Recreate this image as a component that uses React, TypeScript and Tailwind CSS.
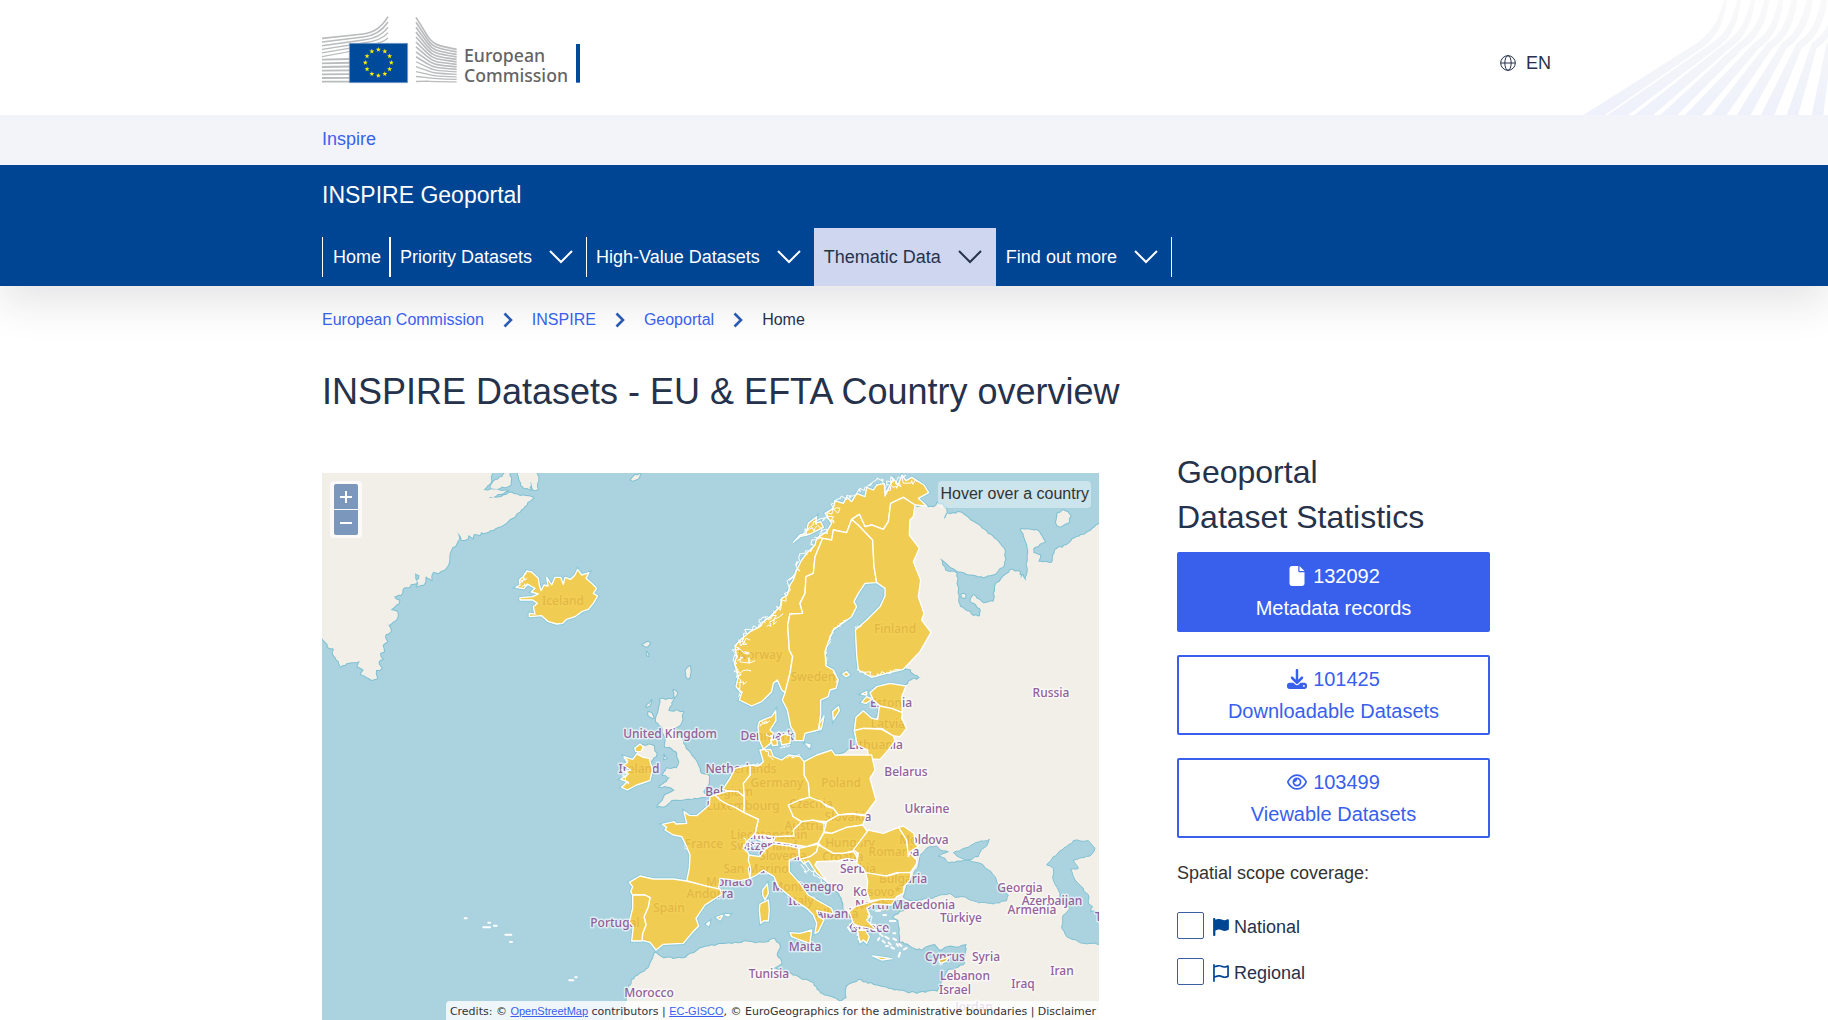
import { useState } from 'react'
import { FaDownload, FaFile, FaFlag, FaRegEye, FaRegFlag } from 'react-icons/fa6'

interface Shape {
  origin: string
  d: string
}

interface MapLabel {
  name: string
  x: number
  y: number
}

// Shapes are digitised per sheet at three units to the pixel
const NW = 'translate(-2 -3) scale(0.33333)'
const NE = 'translate(378 -3) scale(0.33333)'
const SW = 'translate(-2 272) scale(0.33333)'
const MID = 'translate(278 217) scale(0.33333)'
const EAST = 'translate(478 217) scale(0.33333)'
const SOUTH = 'translate(378 367) scale(0.33333)'

// Breaks every straight run of an absolute M/L path into short jagged steps
function roughen(d: string, amp: number, step: number) {
  let seed = 7
  const rand = () => {
    seed = (seed * 1103515245 + 12345) % 2147483648
    return seed / 2147483648 - 0.5
  }
  return d
    .split('M')
    .filter(Boolean)
    .map((part) => {
      const closed = part.trim().endsWith('Z')
      const nums = (part.match(/-?\d+/g) || []).map(Number)
      const pts: number[][] = []
      for (let i = 0; i + 1 < nums.length; i += 2) pts.push([nums[i], nums[i + 1]])
      if (closed) pts.push(pts[0])
      const out = [`M${pts[0][0]} ${pts[0][1]}`]
      for (let i = 1; i < pts.length; i++) {
        const [x0, y0] = pts[i - 1]
        const [x1, y1] = pts[i]
        const n = Math.max(1, Math.round(Math.hypot(x1 - x0, y1 - y0) / step))
        for (let k = 1; k < n; k++) {
          const x = x0 + ((x1 - x0) * k) / n + rand() * amp
          const y = y0 + ((y1 - y0) * k) / n + rand() * amp
          out.push(`L${x.toFixed(1)} ${y.toFixed(1)}`)
        }
        out.push(`L${x1} ${y1}`)
      }
      return out.join('') + (closed ? 'Z' : '')
    })
    .join('')
}

const landOutlines: Shape[] = [
  // Greenland
  {
    origin: NW,
    d: 'M-20 -20L520 -20 512 38 490 60 530 58 565 62 540 72 505 85 545 80 575 68 600 78 640 83 620 105 600 125 575 145 550 165 520 180 490 190 484 186 480 195 462 192 460 205 445 195 440 208 425 210 408 180 418 208 395 238 388 270 378 295 355 310 340 305 335 330 318 318 310 345 290 350 298 315 285 310 290 340 250 355 243 375 222 380 238 392 212 420 232 425 228 450 205 465 212 485 195 500 202 515 188 525 192 545 180 550 188 568 176 575 185 595 168 600 172 625 155 630 140 622 122 612 132 600 112 590 120 572 75 585 62 590 40 555 42 538 30 535 10 510 -20 480Z',
  },
  { origin: NW, d: 'M520 35L570 0 572 45 540 55 512 55Z' },
  { origin: NW, d: 'M590 -5L598 30 612 55 632 60 630 35 638 58 654 58 652 -5Z' },
  { origin: NW, d: 'M932 30L945 15 962 10 950 28Z' },
  { origin: NW, d: 'M968 524L985 515 990 520 978 530ZM980 545L986 558 981 556Z' },
  { origin: NW, d: 'M1097 600L1110 588 1112 605 1104 626Z' },
  { origin: NW, d: 'M1060 660L1072 668 1063 682Z' },
  // Continental Europe with Russia, Turkey and the Levant
  {
    origin: NE,
    d: 'M670 105L700 112 712 98 728 103 740 128 730 155 742 130 760 130 785 128 820 155 860 185 895 215 915 245 912 285 885 312 850 322 800 312 760 295 720 265 735 300 770 310 773 370 780 410 810 425 820 438 840 438 840 415 812 395 820 375 850 400 880 395 885 350 930 300 960 305 962 325 968 315 978 332 982 290 982 230 962 178 1010 180 1035 215 1015 228 1000 235 1000 248 1020 255 1015 275 1055 278 1065 240 1100 225 1130 200 1165 185 1190 165 1230 160 1230 1680 722 1680 712 1565 745 1500 770 1495 795 1480 800 1422 770 1430 745 1428 720 1440 705 1422 670 1435 650 1438 620 1420 600 1415 598 1390 595 1350 580 1342 600 1325 630 1315 610 1290 580 1290 520 1310 500 1325 500 1370 480 1400 455 1370 455 1345 430 1315 425 1285 390 1245 350 1200 320 1165 300 1175 270 1150 150 1100 300 900 430 850 445 838 465 825 500 820 510 760 580 700 600 660 635 630 665 625 645 614 632 598 600 596 560 560 540 450 600 330 590 200 600 120Z',
  },
  { origin: NE, d: 'M1068 158L1072 130 1090 120 1112 138 1102 160 1080 170Z' },
  { origin: NE, d: 'M785 372L797 375 795 384 785 382Z' },
  // North Africa
  {
    origin: SOUTH,
    d: 'M-235 570L-225 490 -215 455 -205 420 -155 385 -135 338 -125 345 -110 355 -50 355 -20 340 0 325 50 315 130 305 190 308 225 298 240 320 230 345 245 370 220 385 265 400 300 415 340 430 360 460 420 485 440 475 440 440 475 420 520 435 590 450 650 462 700 452 716 456 716 570Z',
  },
  // Great Britain and Northern Ireland
  {
    origin: MID,
    d: 'M180 28L222 25 205 62 250 65 245 95 222 120 240 140 262 180 290 215 300 245 328 260 325 285 310 305 325 320 290 325 240 330 215 330 200 345 172 350 195 315 225 300 212 292 178 290 200 275 210 262 188 255 200 235 230 235 238 215 232 190 215 175 195 170 195 140 185 110 168 95 176 60Z',
  },
  { origin: MID, d: 'M108 192L125 165 155 165 170 190 155 212 120 205Z' },
  { origin: MID, d: 'M138 50L155 30 148 48ZM145 65L155 70 160 85 150 80ZM192 195L200 205 192 208Z' },
]

const land = landOutlines.map((shape) => ({ ...shape, d: roughen(shape.d, 6, 8) }))

const inlandWater: Shape[] = [
  // Black Sea and Sea of Azov
  {
    origin: SOUTH,
    d: 'M610 172L620 130 640 105 655 75 660 45 690 20 710 18 720 30 745 35 715 48 735 55 745 68 800 60 850 75 885 110 895 135 925 165 920 182 880 192 830 185 790 170 765 172 750 160 720 165 690 175 650 182 630 182Z',
  },
  { origin: SOUTH, d: 'M760 38L785 28 820 12 868 -2 860 18 845 28 835 50 800 60 778 52Z' },
  // Caspian Sea
  {
    origin: SOUTH,
    d: 'M1040 75L1060 50 1100 20 1120 2 1165 2 1185 25 1170 48 1120 60 1135 85 1112 88 1125 120 1165 165 1165 190 1178 200 1172 215 1220 215 1220 312 1150 310 1100 290 1085 260 1090 225 1110 205 1085 190 1080 160 1060 120 1060 85Z',
  },
  { origin: SOUTH, d: 'M580 205L610 190 640 195 610 205Z' },
].map((shape) => ({ ...shape, d: roughen(shape.d, 5, 9) }))

const countries: Shape[] = [
  // Iceland
  {
    origin: NW,
    d: 'M588 352L600 345 598 330 612 318 620 303 635 306 655 325 658 345 663 362 672 345 684 348 680 322 695 345 705 322 722 322 730 343 735 322 752 328 765 315 773 298 785 315 807 308 798 325 815 340 830 355 820 370 833 378 820 400 805 418 785 425 765 440 740 448 728 460 710 462 685 455 665 437 628 440 628 430 645 432 640 410 652 400 638 390 600 390 600 383 638 380 655 372 634 366 645 355 622 342 612 356Z',
  },
  // Norway
  {
    origin: NE,
    d: 'M645 105L680 108 655 85 686 68 672 45 635 22 618 32 606 15 594 45 580 25 562 62 555 78 553 40 530 45 520 60 500 52 495 80 470 70 455 95 440 80 430 100 405 92 400 115 375 130 395 160 380 185 350 205 345 225 320 250 305 270 290 300 280 330 270 345 262 375 245 385 240 410 210 440 190 455 180 470 150 485 120 510 105 530 110 560 103 580 115 620 108 650 125 670 118 690 155 708 185 695 215 665 220 640 232 630 245 660 255 668 270 610 278 560 268 540 263 465 270 432 308 430 300 400 315 370 318 320 340 310 345 260 368 205 395 210 400 180 440 188 455 148 478 133 495 170 515 165 550 178 565 155 572 100 610 82Z',
  },
  { origin: NE, d: 'M280 217L300 195 318 190 325 160 350 140 346 160 362 155 370 172 330 192 300 200Z' },
  // Sweden
  {
    origin: NE,
    d: 'M455 148L440 188 400 180 395 210 368 205 345 260 340 310 318 320 315 370 300 400 308 430 270 432 263 465 268 540 278 560 270 610 255 668 247 690 262 720 272 770 285 790 285 812 310 812 315 790 355 780 362 735 362 690 385 680 390 660 408 655 415 630 400 600 378 588 375 545 385 515 400 480 455 440 470 410 462 395 475 370 495 340 530 338 522 290 518 210 475 165Z',
  },
  { origin: NE, d: 'M400 750L398 725 415 710 418 722ZM360 780L358 762 372 738 365 775Z' },
  // Finland
  {
    origin: NE,
    d: 'M478 133L495 170 515 165 550 178 565 155 572 100 610 82 645 105 640 140 630 150 628 195 658 235 640 275 662 330 655 380 672 430 665 450 693 487 660 545 610 598 560 610 515 622 475 600 470 555 466 480 500 450 540 410 555 378 555 355 530 338 522 290 518 210 475 165 455 148Z',
  },
  { origin: NE, d: 'M428 612L440 605 448 615 438 620Z' },
  // Baltic states
  { origin: NE, d: 'M510 668L530 650 570 640 618 648 605 680 607 727 570 715 540 708 520 690Z' },
  { origin: NE, d: 'M485 697L500 680 516 688 498 700ZM485 672L500 665 500 675Z' },
  { origin: NE, d: 'M463 782L468 742 490 722 515 745 533 748 538 708 575 715 607 728 605 745 620 775 600 800 580 798 545 775 490 775Z' },
  { origin: EAST, d: 'M163 122L190 115 245 118 280 138 285 152 265 180 240 208 205 207 203 180 172 165Z' },
  // Poland, Germany and neighbours
  { origin: MID, d: 'M612 215L650 195 695 180 705 195 815 195 825 240 810 265 828 330 795 375 755 370 715 375 700 355 680 345 650 335 628 320 625 280 612 255Z' },
  {
    origin: MID,
    d: 'M450 225L475 228 490 215 480 180 512 178 520 200 545 210 565 195 600 200 612 215 612 255 625 280 628 322 600 330 565 345 580 380 605 395 580 420 582 438 525 440 490 435 465 435 475 388 432 368 432 320 430 280 450 255Z',
  },
  { origin: MID, d: 'M478 95L500 85 515 80 527 62 528 92 510 120 520 130 512 160 490 178 478 150 474 110Z' },
  { origin: MID, d: 'M540 140L555 132 572 138 570 160 545 165ZM512 150L530 147 533 165 518 167ZM618 162L630 165 628 172Z' },
  { origin: MID, d: 'M385 303L368 298 390 265 405 235 450 225 450 255 430 280 432 320 415 305Z' },
  { origin: MID, d: 'M345 315L385 303 415 305 432 320 432 350 430 368 405 352 380 342 360 330Z' },
  {
    origin: MID,
    d: 'M330 320L345 315 360 330 380 342 405 352 432 368 475 388 465 430 440 455 430 475 445 490 455 520 445 535 450 565 420 572 360 565 355 600 325 590 260 573 268 535 270 495 258 465 245 440 220 435 195 420 200 412 187 403 222 395 228 402 260 400 252 365 268 376 290 377 328 345Z',
  },
  { origin: MID, d: 'M565 345L600 330 628 322 665 335 680 350 700 355 715 375 680 395 640 392 605 395 580 380Z' },
  { origin: MID, d: 'M680 395L715 375 755 372 798 378 788 405 740 412 695 430 672 425Z' },
  { origin: MID, d: 'M582 438L580 420 605 395 640 390 672 400 672 425 655 458 620 470 570 462 520 455 525 440Z' },
  { origin: MID, d: 'M655 458L672 428 695 430 740 412 788 405 803 425 770 480 730 490 700 490 665 470Z' },
  // Ireland
  { origin: MID, d: 'M72 200L98 208 110 192 130 202 148 205 157 240 150 272 110 285 82 300 65 292 82 275 62 268 85 252 74 245 92 240 70 225 82 218Z' },
  { origin: MID, d: 'M104 175L120 162 130 170 124 184 108 185Z' },
  // Iberia
  {
    origin: SW,
    d: 'M928 412L960 393 1000 402 1060 402 1100 408 1165 425 1200 432 1205 448 1155 480 1128 520 1136 543 1115 565 1090 595 1030 598 1008 615 990 592 966 586 968 565 978 540 972 515 985 485 990 458 975 450 938 450 932 440 938 425Z',
  },
  { origin: SW, d: 'M938 450L975 450 990 458 985 485 972 515 978 540 968 565 966 588 935 588 940 545 928 530 938 490Z' },
  { origin: SOUTH, d: 'M50 232L68 226 60 240ZM76 224L88 224 84 228ZM20 252L28 246 26 256Z' },
  // Italy
  {
    origin: SOUTH,
    d: 'M145 60L147 45 180 50 195 28 220 12 270 18 295 25 298 48 268 60 268 95 300 130 325 165 350 180 395 205 400 222 350 212 355 230 372 240 355 275 345 280 350 250 340 225 320 205 290 185 265 165 235 140 222 110 190 90 170 105 150 115 152 85Z',
  },
  { origin: SOUTH, d: 'M270 278L300 280 335 270 330 310 300 300 275 290Z' },
  { origin: SOUTH, d: 'M180 192L205 180 208 210 205 243 192 242 182 250 178 210Z' },
  { origin: SOUTH, d: 'M188 150L202 132 205 160 195 180 188 165Z' },
  { origin: SOUTH, d: 'M298 50L298 25 355 12 350 35 330 50 315 55 300 58Z' },
  { origin: SOUTH, d: 'M300 58L330 50 350 35 355 15 365 20 400 40 430 40 462 35 475 62 440 55 415 62 350 65 345 75 385 130 350 100 325 62 312 72Z' },
  // Romania, Moldova, Bulgaria and Greece
  { origin: EAST, d: 'M205 420L250 430 296 412 318 445 325 485 350 510 350 520 330 550 290 548 260 558 200 555 190 535 170 520 175 490 160 480 190 440Z' },
  { origin: EAST, d: 'M296 412L310 408 342 430 345 460 355 470 330 485 325 500 320 450Z' },
  { origin: SOUTH, d: 'M497 98L560 108 600 98 633 97 630 120 612 140 610 160 590 170 585 178 540 178 510 182 500 155 503 125Z' },
  { origin: SOUTH, d: 'M448 215L465 200 500 190 540 178 585 178 575 195 520 192 500 205 510 230 500 240 530 272 500 262 475 258 460 250Z' },
  { origin: SOUTH, d: 'M472 272L495 270 508 290 500 310 490 300 480 308Z' },
  { origin: SOUTH, d: 'M518 348L550 352 575 356 545 360Z' },
  { origin: SOUTH, d: 'M716 360L735 355 750 348 738 364 722 370Z' },
]

// Skerries and fjords along the coasts
const skerries: Shape[] = [
  { origin: NE, d: 'M650 35L600 25 590 55 575 20 560 70 550 30 520 35 500 50 480 65 450 85 420 85 400 100 420 115 380 128 400 150 350 150 310 190 345 175 370 180 380 190 345 210 330 245 300 270 285 310 265 345 258 380 240 390 225 430 200 440 175 465 140 490 115 510 108 540 105 575 112 610 120 640 115 680' },
  { origin: NE, d: 'M110 520L150 510M112 572L165 572M115 540L150 550M120 610L150 600M118 640L140 635M180 460L245 435M200 470L230 455' },
].map((shape) => ({ ...shape, d: roughen(shape.d, 22, 6) }))

const roughCoasts: Shape[] = [
  { origin: NE, d: 'M470 600L495 605 520 618 560 608 600 598M380 590L378 540 400 480 440 450M466 470L485 465M400 600L412 640' },
  { origin: SOUTH, d: 'M310 60L320 80 335 95 350 108 375 128M305 75L320 100' },
  { origin: MID, d: 'M478 95L510 92M480 110L500 100M500 130L520 150M530 130L575 130M540 175L570 165M455 225L485 225M560 205L600 195M495 180L520 210' },
  { origin: MID, d: 'M430 445L460 465 500 440M430 470L480 465 495 490' },
  { origin: MID, d: 'M62 240L80 245 70 262 85 275 65 290M75 200L85 215' },
  { origin: NW, d: 'M600 340L620 310M605 350L625 345M600 330L622 325' },
  { origin: SOUTH, d: 'M500 200L512 240 530 270M450 250L475 268 500 270M470 275L480 305' },
].map((shape) => ({ ...shape, d: roughen(shape.d, 12, 5) }))

const islets: Shape[] = [
  { origin: SW, d: 'M434 520H440M490 547H510M505 533H510M522 542H530M556 569H574M570 591H576M748 706H760M766 697H770' },
  { origin: SOUTH, d: 'M528 212H540M550 225H558M570 243H586M536 262H542M556 268H562M540 282L548 288M556 290L566 296M548 302L554 308M566 308L572 314M580 296L588 300M574 322L582 326M590 312L594 318M604 318L598 312M612 328L620 324M600 338L596 350M538 294L534 300M580 280H586M558 318H564M444 262L452 272M312 334H318' },
]

const labels: MapLabel[] = [
  { name: 'Iceland', x: 241, y: 132 },
  { name: 'Norway', x: 438, y: 186 },
  { name: 'Sweden', x: 491, y: 208 },
  { name: 'Finland', x: 573, y: 160 },
  { name: 'Estonia', x: 569, y: 234 },
  { name: 'Latvia', x: 566, y: 255 },
  { name: 'Lithuania', x: 554, y: 276 },
  { name: 'Russia', x: 729, y: 224 },
  { name: 'Belarus', x: 584, y: 303 },
  { name: 'Ukraine', x: 605, y: 340 },
  { name: 'Moldova', x: 602, y: 371 },
  { name: 'United Kingdom', x: 348, y: 265 },
  { name: 'Ireland', x: 317, y: 300 },
  { name: 'Denmark', x: 445, y: 267 },
  { name: 'Netherlands', x: 419, y: 300 },
  { name: 'Belgium', x: 407, y: 323 },
  { name: 'Germany', x: 455, y: 314 },
  { name: 'Poland', x: 519, y: 314 },
  { name: 'Luxembourg', x: 421, y: 337 },
  { name: 'Czechia', x: 489, y: 335 },
  { name: 'Slovakia', x: 526, y: 348 },
  { name: 'Austria', x: 483, y: 357 },
  { name: 'Liechtenstein', x: 447, y: 366 },
  { name: 'France', x: 382, y: 375 },
  { name: 'Switzerland', x: 442, y: 377 },
  { name: 'Hungary', x: 528, y: 374 },
  { name: 'Slovenia', x: 461, y: 387 },
  { name: 'Croatia', x: 521, y: 388 },
  { name: 'Romania', x: 572, y: 383 },
  { name: 'San Marino', x: 434, y: 400 },
  { name: 'Serbia', x: 536, y: 400 },
  { name: 'Bulgaria', x: 581, y: 410 },
  { name: 'Monaco', x: 407, y: 413 },
  { name: 'Montenegro', x: 486, y: 418 },
  { name: 'Andorra', x: 388, y: 425 },
  { name: 'Kosovo*', x: 555, y: 423 },
  { name: 'Italy', x: 479, y: 432 },
  { name: 'Spain', x: 347, y: 439 },
  { name: 'North Macedonia', x: 583, y: 436 },
  { name: 'Albania', x: 515, y: 445 },
  { name: 'Portugal', x: 293, y: 454 },
  { name: 'Greece', x: 547, y: 459 },
  { name: 'Türkiye', x: 639, y: 449 },
  { name: 'Georgia', x: 698, y: 419 },
  { name: 'Azerbaijan', x: 730, y: 432 },
  { name: 'Armenia', x: 710, y: 441 },
  { name: 'Malta', x: 483, y: 478 },
  { name: 'Cyprus', x: 623, y: 488 },
  { name: 'Syria', x: 664, y: 488 },
  { name: 'Tunisia', x: 447, y: 505 },
  { name: 'Lebanon', x: 643, y: 507 },
  { name: 'Israel', x: 633, y: 521 },
  { name: 'Iran', x: 740, y: 502 },
  { name: 'Iraq', x: 701, y: 515 },
  { name: 'Morocco', x: 327, y: 524 },
  { name: 'Jordan', x: 652, y: 538 },
]

const navItems = [
  { label: 'Home', menu: false, active: false },
  { label: 'Priority Datasets', menu: true, active: false },
  { label: 'High-Value Datasets', menu: true, active: false },
  { label: 'Thematic Data', menu: true, active: true },
  { label: 'Find out more', menu: true, active: false },
]

const stats = [
  { value: '132092', label: 'Metadata records', icon: FaFile, filled: true },
  { value: '101425', label: 'Downloadable Datasets', icon: FaDownload, filled: false },
  { value: '103499', label: 'Viewable Datasets', icon: FaRegEye, filled: false },
]

const scopes = [
  { id: 'national', label: 'National', icon: FaFlag },
  { id: 'regional', label: 'Regional', icon: FaRegFlag },
]

// [bottom left, bottom right, knee x, top left, top right]
const ribbons = [
  [310, 375, 650, 732, 741],
  [383, 445, 695, 772, 783],
  [463, 520, 735, 813, 825],
  [541, 592, 775, 853, 868],
  [615, 667, 822, 896, 910],
  [693, 740, 862, 935, 952],
  [770, 812, 905, 980, 998],
  [843, 883, 950, 1025, 1042],
  [920, 955, 995, 1068, 1086],
  [995, 1030, 1040, 1112, 1130],
]

function ShapeLayer({ shapes, className }: { shapes: Shape[]; className: string }) {
  return (
    <g className={className}>
      {shapes.map((shape) => (
        <path key={shape.d} d={shape.d} transform={shape.origin} />
      ))}
    </g>
  )
}

function CommissionLogo() {
  const stars = Array.from({ length: 12 }, (_, i) => {
    const a = (i * Math.PI) / 6
    return { x: 205 + 39 * Math.sin(a), y: 188 - 39 * Math.cos(a) }
  })

  return (
    <svg viewBox="36 45 774 207" className="w-[258px] h-[69px]" role="img" aria-label="European Commission">
      <g fill="none" stroke="#b9bbbc">
        {[0, 1, 2, 3, 4, 5].map((i) => (
          <path
            key={i}
            strokeWidth={5 - i * 0.3}
            d={`M36 ${115 + i * 11}L160 ${102 + i * 9}C200 ${98 + i * 9} 222 ${70 + i * 14} 234 ${50 + i * 16}`}
          />
        ))}
        {[0, 1, 2, 3, 4, 5, 6].map((i) => (
          <path key={i} strokeWidth="5.5" d={`M36 ${179 + i * 11}L120 ${177 + i * 11.3}`} />
        ))}
        {Array.from({ length: 14 }, (_, i) => (
          <path
            key={i}
            strokeWidth={i < 9 ? 5 : 4}
            d={`M318 ${52 + i * 14.8}L352 ${107 + i * 10.5}C368 ${132 + i * 8.7} 376 ${136 + i * 8.4} 440 ${148 + i * 7.5}`}
          />
        ))}
      </g>
      <path d="M118 130H293V248H118Z" fill="#004a9c" stroke="#8ba7cf" strokeWidth="2" />
      {stars.map((s) => (
        <path
          key={`${s.x}-${s.y}`}
          transform={`translate(${s.x} ${s.y})`}
          d="M0 -8L1.9 -2.5 7.6 -2.5 3 1 4.7 6.5 0 3.2 -4.7 6.5 -3 1 -7.6 -2.5 -1.9 -2.5Z"
          fill="#ffed00"
        />
      ))}
      <g fill="#636466" fontSize="53" fontWeight="500" className="font-['Noto_Sans',sans-serif]">
        <text x="462" y="186">European</text>
        <text x="462" y="246">Commission</text>
      </g>
      <path d="M798 132H810V248H798Z" fill="#004a9c" />
    </svg>
  )
}

function HeaderRibbons() {
  return (
    <svg viewBox="0 0 1044 345" className="absolute right-0 top-0 h-full" aria-hidden="true">
      <defs>
        <linearGradient id="ribbon" x1="0" y1="0" x2="0" y2="345" gradientUnits="userSpaceOnUse">
          <stop offset="0" stopColor="#f9f9fa" />
          <stop offset="0.5" stopColor="#f4f5f9" />
          <stop offset="1" stopColor="#eef1fb" />
        </linearGradient>
      </defs>
      {ribbons.map(([bl, br, knee, tl, tr]) => (
        <path
          key={bl}
          fill="url(#ribbon)"
          d={`M${bl} 345L${knee} 130C${knee + 50} 95 ${tl - 15} 55 ${tl} 0H${tr}C${tr - 8} 60 ${knee + 65} 110 ${knee + 15} 145L${br} 345Z`}
        />
      ))}
    </svg>
  )
}

function GlobeIcon() {
  return (
    <svg viewBox="0 0 48 48" className="size-4" fill="none" stroke="currentColor" strokeWidth="3" aria-hidden="true">
      <circle cx="24" cy="24" r="22" />
      <ellipse cx="24" cy="24" rx="9.5" ry="22" />
      <path d="M2 24H46" />
    </svg>
  )
}

function ChevronDown() {
  return (
    <svg viewBox="0 0 24 14" className="w-6 h-3.5" fill="none" stroke="currentColor" strokeWidth="2" aria-hidden="true">
      <path d="M1 1L12 12 23 1" />
    </svg>
  )
}

function CountryMap() {
  return (
    <div className="relative h-[547px] flex-1 overflow-hidden bg-[#aad3df]">
      <svg viewBox="0 0 777 547" preserveAspectRatio="xMinYMin slice" className="block w-full h-full" aria-label="Map of Europe">
        <ShapeLayer shapes={countries} className="fill-[#f2efe9] stroke-[#8fcad8] stroke-10" />
        <ShapeLayer shapes={land} className="fill-[#f2efe9] stroke-[#7fc0d1] stroke-[6px] [stroke-linejoin:round]" />
        <ShapeLayer shapes={land} className="fill-[#f2efe9]" />
        <ShapeLayer shapes={inlandWater} className="fill-[#aad3df] stroke-[#7fc0d1] stroke-3" />
        <ShapeLayer shapes={countries} className="fill-[#f2efe9]" />
        <g
          textAnchor="middle"
          fontSize="12"
          fontWeight="500"
          strokeLinejoin="round"
          className="fill-[#92609a] stroke-white/60 stroke-3 [paint-order:stroke] font-['Noto_Sans',sans-serif]"
        >
          {labels.map((label) => (
            <text key={label.name} x={label.x} y={label.y}>{label.name}</text>
          ))}
          <text x="773" y="448" textAnchor="start">Turkmenistan</text>
        </g>
        <ShapeLayer shapes={countries} className="fill-[#f0c737]/85 stroke-white stroke-[4px] [stroke-linejoin:round]" />
        <ShapeLayer shapes={skerries} className="fill-none stroke-white stroke-3" />
        <ShapeLayer shapes={roughCoasts} className="fill-none stroke-white stroke-3" />
        <ShapeLayer shapes={islets} className="fill-none stroke-white stroke-[6px] [stroke-linecap:round]" />
      </svg>

      <div className="absolute left-2 top-2 flex flex-col gap-px rounded-sm bg-white/70 px-1 py-[3px]">
        <button className="flex items-center justify-center w-6 h-[25px] rounded-t-xs bg-[#7b98bc] text-white" aria-label="Zoom in">
          <svg viewBox="0 0 12 12" className="size-3" stroke="currentColor" strokeWidth="2"><path d="M0 6H12M6 0V12" /></svg>
        </button>
        <button className="flex items-center justify-center w-6 h-[25px] rounded-b-xs bg-[#7b98bc] text-white" aria-label="Zoom out">
          <svg viewBox="0 0 12 12" className="size-3" stroke="currentColor" strokeWidth="2"><path d="M0 6H12" /></svg>
        </button>
      </div>

      <div className="absolute right-2 top-2 rounded-sm bg-white/40 px-0.5 pb-0.5 text-base leading-[25px] text-[#333]">
        Hover over a country
      </div>

      <div className="absolute right-0 bottom-0 whitespace-nowrap rounded-tl-sm bg-white/80 pl-1 pr-[3px] pt-0.5 font-['DejaVu_Sans',sans-serif] text-[11px] leading-4 text-[#333]">
        Credits: ©{' '}
        <a href="#osm" className="font-['Liberation_Sans',Arial,sans-serif] text-[#3860ed] underline">OpenStreetMap</a>
        {' '}contributors |{' '}
        <a href="#gisco" className="font-['Liberation_Sans',Arial,sans-serif] text-[#3860ed] underline">EC-GISCO</a>
        , © EuroGeographics for the administrative boundaries | Disclaimer
      </div>
    </div>
  )
}

export default function App() {
  const [selected, setSelected] = useState<string[]>([])

  const toggleScope = (id: string) => {
    setSelected(selected.includes(id) ? selected.filter((s) => s !== id) : [...selected, id])
  }

  return (
    <div className="bg-white font-['Liberation_Sans',Arial,sans-serif] text-lg text-[#26324b] overflow-x-hidden">
      <header className="shadow-[0_16px_40px_0_rgba(30,34,50,0.12)]">
        <div className="relative h-[115px] bg-white">
          <HeaderRibbons />
          <div className="relative max-w-[1184px] mx-auto flex items-start justify-between pt-[15px]">
            <a href="#ec"><CommissionLogo /></a>
            <button className="-mr-[45px] mt-[34px] flex items-center gap-2.5 leading-7">
              <GlobeIcon />
              EN
            </button>
          </div>
        </div>

        <div className="bg-[#f3f4fa]">
          <div className="max-w-[1184px] mx-auto h-[50px] flex items-center">
            <a href="#inspire" className="text-[#3860ed] leading-7 pb-0.5">Inspire</a>
          </div>
        </div>

        <div className="bg-[#004494] text-white">
          <div className="max-w-[1184px] mx-auto">
            <p className="text-[23px] leading-[30px] pt-[15px] pb-[18px]">INSPIRE Geoportal</p>
            <nav>
              <ul className="flex h-[58px]">
                {navItems.map((item) => (
                  <li
                    key={item.label}
                    className={
                      item.active
                        ? 'flex items-center bg-[#cfd6ef] text-[#26324b]'
                        : 'flex items-center group'
                    }
                  >
                    <a
                      href="#nav"
                      className={
                        item.active
                          ? 'flex items-center gap-[17px] h-10 pl-2.5 pr-3.5'
                          : item.menu
                            ? 'flex items-center gap-[17px] h-10 pl-[9px] pr-[13px] border-l border-white group-last:border-l-transparent group-last:border-r'
                            : 'flex items-center h-10 pl-2.5 pr-2 border-x border-white'
                      }
                    >
                      {item.label}
                      {item.menu && <ChevronDown />}
                    </a>
                  </li>
                ))}
              </ul>
            </nav>
          </div>
        </div>
      </header>

      <main className="max-w-[1184px] mx-auto">
        <nav aria-label="Breadcrumb" className="pt-[22px]">
          <ol className="flex text-base leading-6">
            {['European Commission', 'INSPIRE', 'Geoportal'].map((crumb) => (
              <li key={crumb} className="flex items-center">
                <a href="#crumb" className="text-[#3860ed]">{crumb}</a>
                <svg viewBox="0 0 10 16" className="w-2.5 h-4 mx-[19px]" fill="none" stroke="#2b5bb0" strokeWidth="2.6" aria-hidden="true">
                  <path d="M1.5 1.5L8 8 1.5 14.5" />
                </svg>
              </li>
            ))}
            <li>Home</li>
          </ol>
        </nav>

        <h1 className="mt-9 text-4xl leading-12">INSPIRE Datasets - EU &amp; EFTA Country overview</h1>

        <div className="flex items-start gap-[78px] pr-4 mt-[34px]">
          <div className="flex flex-1 pt-[23px]">
            <CountryMap />
          </div>

          <aside className="w-[313px]">
            <h2 className="text-[32px] leading-[45px]">
              Geoportal
              <br />
              Dataset Statistics
            </h2>

            <div className="mt-3 flex flex-col gap-[23px]">
              {stats.map((stat) => (
                <button
                  key={stat.label}
                  className={
                    stat.filled
                      ? 'h-20 rounded-xs border-2 border-[#3860ed] bg-[#3860ed] text-white text-xl leading-8'
                      : 'h-20 rounded-xs border-2 border-[#3860ed] bg-white text-[#3860ed] text-xl leading-8'
                  }
                >
                  <span className="flex items-center justify-center gap-1.5">
                    <stat.icon className="h-5 w-auto" />
                    {stat.value}
                  </span>
                  {stat.label}
                </button>
              ))}
            </div>

            <p className="mt-[21px] leading-7 text-[#333]">Spatial scope coverage:</p>

            <div className="mt-[25px] flex flex-col gap-[19px]">
              {scopes.map((scope) => (
                <label key={scope.id} className="flex items-center gap-[9px] h-[27px]">
                  <input
                    type="checkbox"
                    className="appearance-none size-[27px] rounded-xs border border-[#3e5f9f] bg-white checked:bg-[#3860ed]"
                    checked={selected.includes(scope.id)}
                    onChange={() => toggleScope(scope.id)}
                  />
                  <span className="flex items-center gap-[5px] pt-0.5">
                    <scope.icon className="h-[18px] w-4 text-[#004494]" />
                    {scope.label}
                  </span>
                </label>
              ))}
            </div>
          </aside>
        </div>
      </main>
    </div>
  )
}
